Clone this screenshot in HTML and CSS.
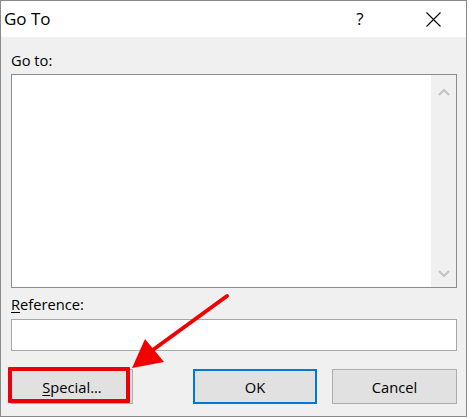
FILE: index.html
```html
<!DOCTYPE html>
<html lang="en">
<head>
<meta charset="utf-8">
<title>Go To</title>
<link rel="stylesheet" href="styles.css">
</head>
<body>
<div class="window">
  <div class="titlebar">
    <span class="title">Go To</span>
    <span class="help">?</span>
    <span class="close">
      <svg width="15" height="15" viewBox="0 0 15 15"><path d="M0.5 0.5 L14.5 14.5 M14.5 0.5 L0.5 14.5" stroke="#000" stroke-width="1.1" fill="none"/></svg>
    </span>
  </div>
  <div class="content">
    <div class="label">Go to:</div>
    <div class="listbox">
      <div class="list-area"></div>
      <div class="scrollbar">
        <svg width="12" height="8" viewBox="0 0 12 8"><path d="M1 7 L6 2 L11 7" stroke="#c3c3c3" stroke-width="2.2" fill="none"/></svg>
        <svg width="12" height="8" viewBox="0 0 12 8"><path d="M1 1 L6 6 L11 1" stroke="#c3c3c3" stroke-width="2.2" fill="none"/></svg>
      </div>
    </div>
    <div class="label label-ref"><u>R</u>eference:</div>
    <div class="input"></div>
    <div class="buttons">
      <button class="btn btn-special"><u>S</u>pecial...</button>
      <button class="btn btn-ok">OK</button>
      <button class="btn btn-cancel">Cancel</button>
    </div>
  </div>
  <svg class="arrow" width="469" height="419" viewBox="0 0 469 419">
    <line x1="227" y1="296" x2="150" y2="352" stroke="#f20000" stroke-width="4" stroke-linecap="round"/>
    <polygon points="132,368 145,339 164,362" fill="#f20000"/>
  </svg>
</div>
</body>
</html>
```
FILE: styles.css
```css
html, body {
  margin: 0;
  padding: 0;
  background: #ffffff;
}
body {
  font-family: "Open Sans", "Noto Sans", sans-serif;
  color: #000;
}
.window {
  position: relative;
  width: 465px;
  height: 415px;
  border: 1px solid #8a8a8a;
  display: flex;
  flex-direction: column;
  background: #f0f0f0;
}
.titlebar {
  height: 36px;
  background: #ffffff;
  display: flex;
  align-items: center;
  padding: 0 10px 0 3px;
}
.title {
  flex: 1;
  font-size: 17px;
  line-height: 36px;
}
.help {
  width: 46px;
  text-align: center;
  font-size: 17px;
  line-height: 36px;
  margin-right: 27px;
}
.close {
  width: 46px;
  height: 36px;
  display: flex;
  align-items: center;
  justify-content: center;
}
.close svg {
  display: block;
}
.content {
  flex: 1;
  padding: 13px 9px 0 10px;
  display: flex;
  flex-direction: column;
}
.label {
  font-size: 14.7px;
  line-height: 20px;
  height: 20px;
  margin-bottom: 4px;
}
.label u {
  text-decoration-thickness: 1px;
  text-underline-offset: 2px;
}
.label-ref {
  margin-top: 6px;
  margin-bottom: 5px;
}
.listbox {
  height: 212px;
  border: 1px solid #8c8c8c;
  background: #ffffff;
  display: flex;
}
.list-area {
  flex: 1;
}
.scrollbar {
  width: 25px;
  background: #f0f0f0;
  display: flex;
  flex-direction: column;
  align-items: center;
  justify-content: space-between;
  padding: 13px 0 9px;
}
.scrollbar svg {
  display: block;
}
.input {
  height: 30px;
  border: 1px solid #a8a8a8;
  background: #ffffff;
}
.buttons {
  margin-top: 18px;
  display: flex;
  gap: 15px;
}
.btn {
  width: 124px;
  height: 35px;
  box-sizing: border-box;
  background: #e1e1e1;
  border: 1px solid #adadad;
  font-family: "Open Sans", "Noto Sans", sans-serif;
  font-size: 14.7px;
  line-height: 20px;
  color: #000;
  padding: 0;
  margin: 0;
}
.btn u {
  text-decoration-thickness: 1px;
  text-underline-offset: 2px;
}
.btn-special {
  position: relative;
  width: 122px;
}
.btn-special::after {
  content: "";
  position: absolute;
  left: -4px;
  top: -3px;
  right: 2px;
  bottom: 0;
  border: 4px solid #e8000b;
  border-radius: 1px;
}
.btn-ok {
  margin-left: auto;
  border: 2px solid #0078d7;
}
.btn-cancel {
  width: 125px;
}
.arrow {
  position: absolute;
  left: -1px;
  top: -1px;
  pointer-events: none;
}
```
